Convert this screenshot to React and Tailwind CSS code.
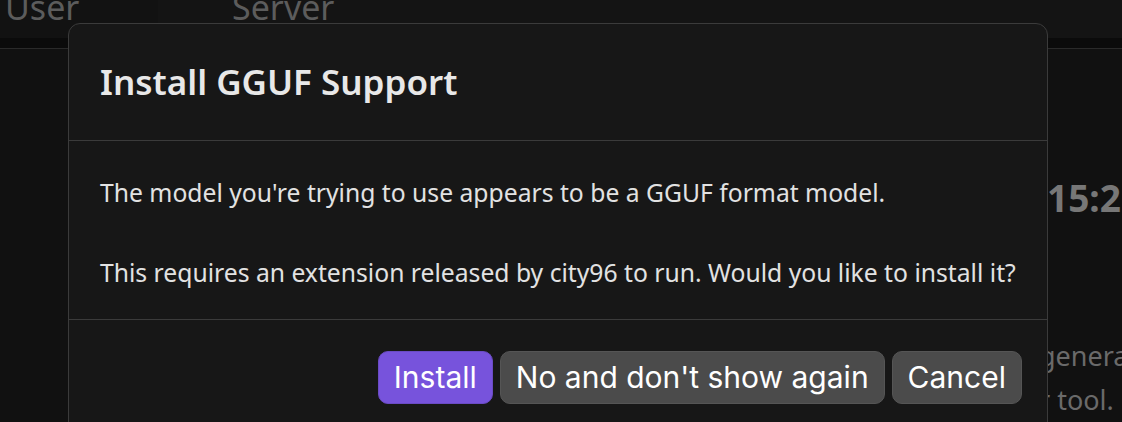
export default function App() {
  return (
    <div className="relative w-[1122px] h-[422px] overflow-hidden bg-[#111111] font-['Noto_Sans',sans-serif]">
      {/* background page */}
      <div className="flex h-[38px] bg-[#141414]">
        <div className="w-[158px] bg-[#121212] relative overflow-hidden">
          <span className="absolute left-[5px] top-[-18px] text-[34px] text-[#5c5c5c]">User</span>
        </div>
        <div className="relative overflow-hidden flex-1">
          <span className="absolute left-[74px] top-[-18px] text-[34px] text-[#5c5c5c]">Server</span>
        </div>
      </div>
      <div className="h-[11px] bg-[#0b0b0b] border-b border-[#2a2a2a]" />
      <div className="flex justify-end">
        <div className="w-[75px] overflow-hidden">
          <div className="mt-[130px] text-[37px] font-bold text-[#777] leading-none whitespace-nowrap">15:2</div>
          <div className="mt-[118px] text-[27px] text-[#6a6a6a] leading-[44px] whitespace-nowrap -ml-[8px]">
            <div>genera</div>
            <div>r tool.</div>
          </div>
        </div>
      </div>

      {/* dialog */}
      <div className="absolute left-[68px] top-[23px] w-[980px] h-[420px] bg-[#171717] border border-[#3b3b3b] rounded-[12px]">
        <div className="h-[117px] border-b border-[#3b3b3b] flex items-center px-[31px]">
          <h2 className="text-[35px] font-semibold text-[#e8e8e8] leading-none pb-[2px]">Install GGUF Support</h2>
        </div>
        <div className="h-[179px] border-b border-[#3b3b3b] px-[31px] pt-[36px] text-[24.7px] text-[#e2e2e2] leading-[32px]">
          <p>The model you're trying to use appears to be a GGUF format model.</p>
          <p className="mt-[48px]">This requires an extension released by city96 to run. Would you like to install it?</p>
        </div>
        <div className="flex justify-end gap-[7px] pt-[31px] pr-[25px] font-['Inter',sans-serif]">
          <button className="h-[53px] px-[15px] rounded-[10px] bg-[#7753dc] border border-[#6a4bc4] text-white text-[30px]">Install</button>
          <button className="h-[53px] px-[15px] rounded-[10px] bg-[#4b4b4b] border border-[#555] text-white text-[30px]">No and don't show again</button>
          <button className="h-[53px] px-[15px] rounded-[10px] bg-[#4b4b4b] border border-[#555] text-white text-[30px]">Cancel</button>
        </div>
      </div>
    </div>
  );
}
